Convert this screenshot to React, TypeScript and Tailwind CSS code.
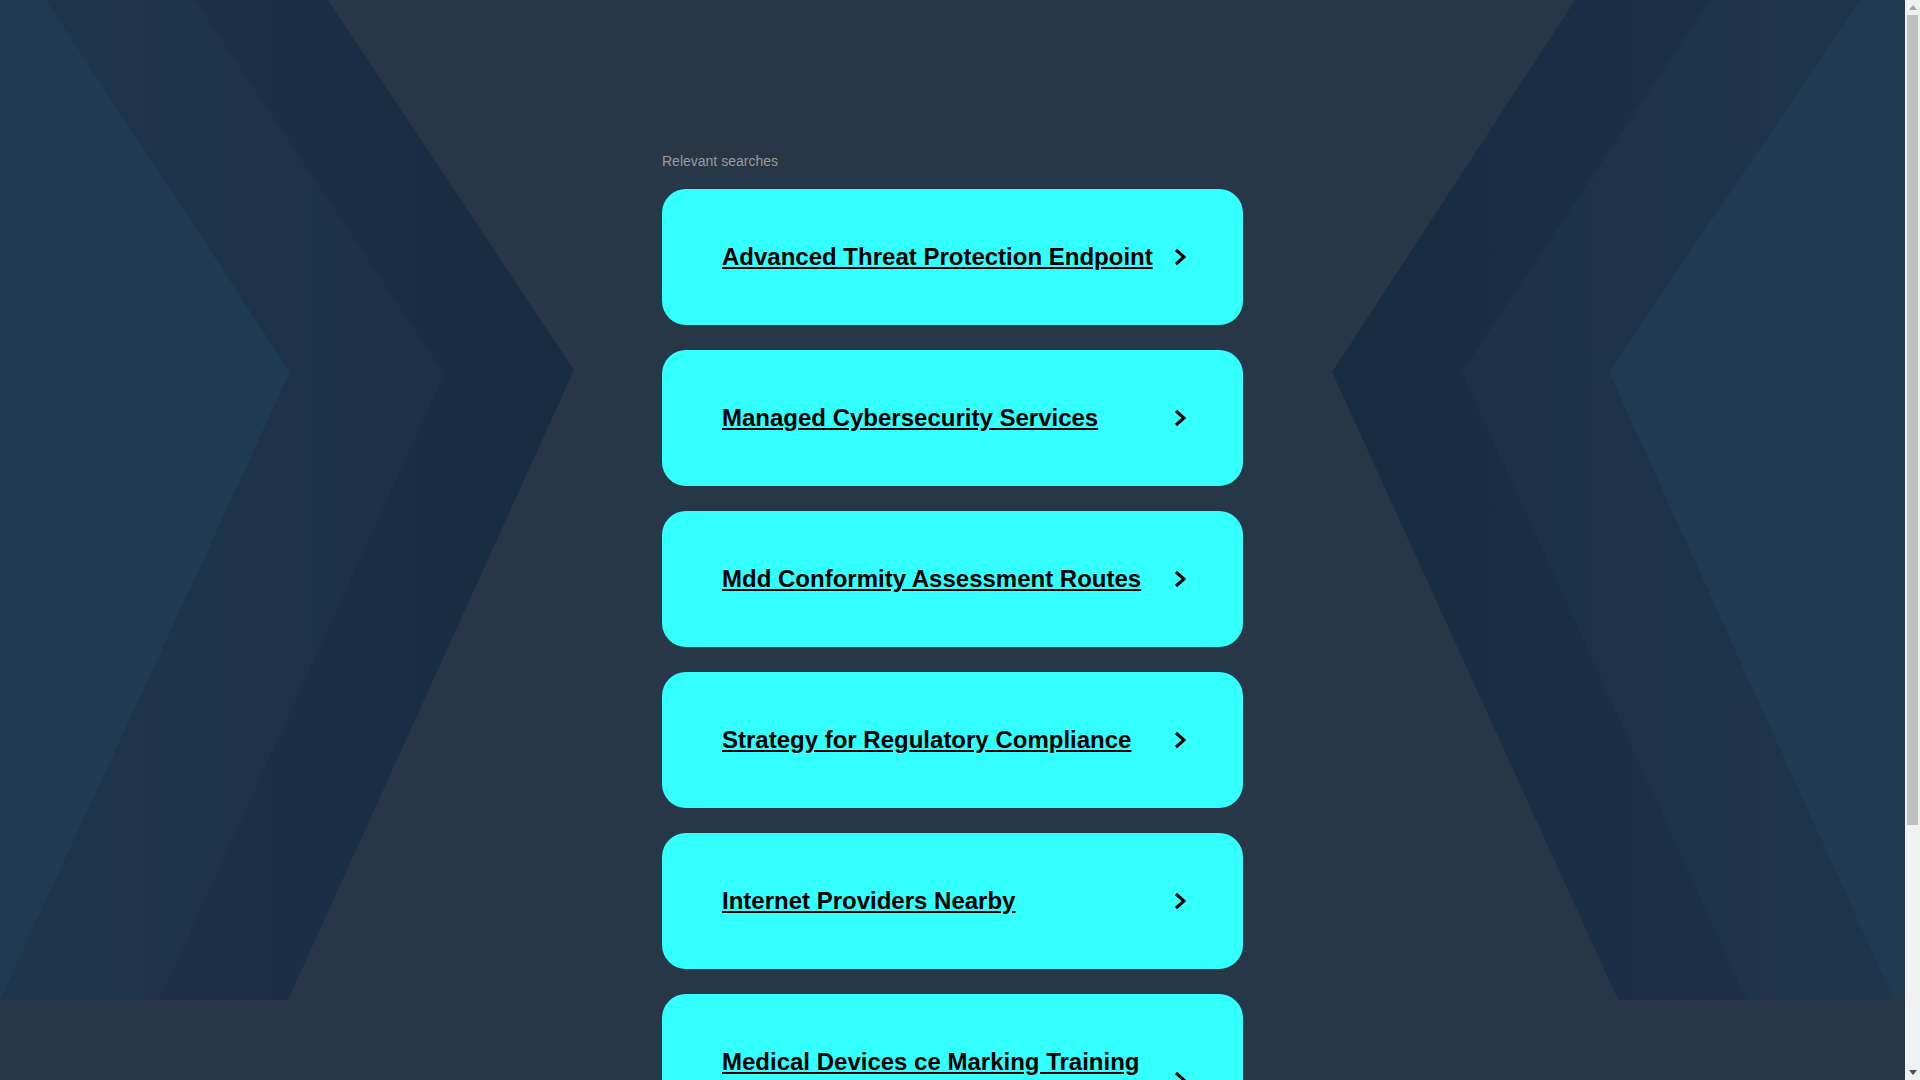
import React from 'react'

const searches = [
  'Advanced Threat Protection Endpoint',
  'Managed Cybersecurity Services',
  'Mdd Conformity Assessment Routes',
  'Strategy for Regulatory Compliance',
  'Internet Providers Nearby',
  'Medical Devices ce Marking Training Courses',
]

function Backdrop() {
  return (
    <svg
      className="absolute left-0 top-0 h-[1000px] w-full"
      viewBox="0 0 1905 1000"
      preserveAspectRatio="none"
      aria-hidden="true"
    >
      <defs>
        <linearGradient id="outerL" x1="0" x2="1" y1="0" y2="0">
          <stop offset="0" stopColor="#1d3249" />
          <stop offset="1" stopColor="#172b41" />
        </linearGradient>
        <linearGradient id="midL" x1="0" x2="1" y1="0" y2="0">
          <stop offset="0" stopColor="#1f354c" />
          <stop offset="1" stopColor="#1c3147" />
        </linearGradient>
        <linearGradient id="outerR" x1="1" x2="0" y1="0" y2="0">
          <stop offset="0" stopColor="#1d3249" />
          <stop offset="1" stopColor="#172b41" />
        </linearGradient>
        <linearGradient id="midR" x1="1" x2="0" y1="0" y2="0">
          <stop offset="0" stopColor="#1f354c" />
          <stop offset="1" stopColor="#1c3147" />
        </linearGradient>
      </defs>

      {/* left chevrons */}
      <polygon points="0,0 328,0 574,370 288,1000 0,1000" fill="url(#outerL)" />
      <polygon points="0,0 195,0 444,374 159,1000 0,1000" fill="url(#midL)" />
      <polygon points="0,0 46,0 290,372 0,1000" fill="#203a51" />

      {/* right chevrons */}
      <polygon points="1905,0 1575,0 1332,372 1618,1000 1905,1000" fill="url(#outerR)" />
      <polygon points="1905,0 1710,0 1462,372 1747,1000 1905,1000" fill="url(#midR)" />
      <polygon points="1905,0 1860,0 1609,372 1894,1000 1905,1000" fill="#203a51" />
    </svg>
  )
}

function Chevron() {
  return (
    <svg className="ml-3 h-[18px] w-3 shrink-0" viewBox="0 0 12 18" fill="none">
      <polyline points="2,2 10,9 2,16" stroke="#000" strokeWidth="3" strokeLinejoin="miter" />
    </svg>
  )
}

// classic scrollbar look, the headless browser hides the native one
function Scrollbar() {
  return (
    <div className="flex w-[15px] shrink-0 flex-col items-center bg-[#f1f1f1]">
      <svg className="mt-[5px] h-[5px] w-[8px]" viewBox="0 0 8 5">
        <polygon points="4,0 8,5 0,5" fill="#a3a3a3" />
      </svg>
      <div className="mt-[5px] h-[810px] w-[11px] bg-[#c1c1c1]" />
      <div className="flex-1" />
      <svg className="mb-[5px] h-[5px] w-[8px]" viewBox="0 0 8 5">
        <polygon points="0,0 8,0 4,5" fill="#505050" />
      </svg>
    </div>
  )
}

export default function App() {
  return (
    <div className="flex h-screen bg-[#283747] font-['Liberation_Sans',Arial,sans-serif]">
      <div className="flex-1 overflow-y-auto [scrollbar-width:none]">
        <div className="relative">
          <Backdrop />

          <main className="relative mx-auto w-[581px] pt-[151px] pb-[234px]">
            <p className="mb-[18px] text-[14px] leading-5 text-[#9b9b9b]">Relevant searches</p>

            <div className="flex flex-col gap-[25px]">
              {searches.map(term => (
                <a
                  key={term}
                  href="#"
                  className="flex items-center rounded-3xl bg-[#33ffff] py-[50px] pl-[60px] pr-[57px]"
                >
                  <span className="flex-1 text-[24px] font-bold leading-9 text-black underline">
                    {term}
                  </span>
                  <Chevron />
                </a>
              ))}
            </div>
          </main>
        </div>
      </div>
      <Scrollbar />
    </div>
  )
}
